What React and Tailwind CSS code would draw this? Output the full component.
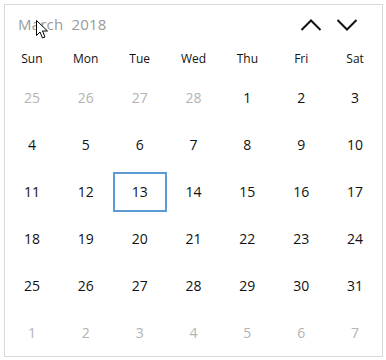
import React from "react";

const days = ["Sun", "Mon", "Tue", "Wed", "Thu", "Fri", "Sat"];

const weeks = [
  [[25, 0], [26, 0], [27, 0], [28, 0], [1, 1], [2, 1], [3, 1]],
  [[4, 1], [5, 1], [6, 1], [7, 1], [8, 1], [9, 1], [10, 1]],
  [[11, 1], [12, 1], [13, 2], [14, 1], [15, 1], [16, 1], [17, 1]],
  [[18, 1], [19, 1], [20, 1], [21, 1], [22, 1], [23, 1], [24, 1]],
  [[25, 1], [26, 1], [27, 1], [28, 1], [29, 1], [30, 1], [31, 1]],
  [[1, 0], [2, 0], [3, 0], [4, 0], [5, 0], [6, 0], [7, 0]],
];

export default function App() {
  return (
    <div className="w-[386px] h-[360px] bg-white pt-1 pl-1" style={{ fontFamily: '"Open Sans", "Noto Sans", sans-serif' }}>
      <div className="relative w-[379px] h-[353px] border border-[#d9d9d9] flex flex-col">
        <div className="h-[39px] flex items-center pl-[13px] pr-[24px]">
          <span className="text-[15px] text-[#9a9a9a] tracking-[0.2px]">March&nbsp;&nbsp;2018</span>
          <div className="ml-auto flex items-center gap-[14px]">
            <svg width="22" height="14" viewBox="0 0 22 14">
              <path d="M1.5 12 L11 2.5 L20.5 12" fill="none" stroke="#111" strokeWidth="2" />
            </svg>
            <svg width="22" height="14" viewBox="0 0 22 14">
              <path d="M1.5 2 L11 11.5 L20.5 2" fill="none" stroke="#111" strokeWidth="2" />
            </svg>
          </div>
        </div>
        <div className="h-[30px] grid grid-cols-7 items-center text-[12px] text-[#111]">
          {days.map((d) => (
            <div key={d} className="text-center">{d}</div>
          ))}
        </div>
        <div className="flex-1 grid grid-cols-7 grid-rows-6">
          {weeks.flat().map(([n, t], i) => (
            <div key={i} className="flex items-center justify-center">
              {t === 2 ? (
                <div className="w-[54px] h-[40px] border-2 border-[#5b9bd5] flex items-center justify-center text-[14px] text-[#111]">
                  {n}
                </div>
              ) : (
                <span className={"text-[14px] " + (t === 1 ? "text-[#111]" : "text-[#b3b3b3]")}>{n}</span>
              )}
            </div>
          ))}
        </div>
        <svg className="absolute left-[31px] top-[15px]" width="13" height="20" viewBox="0 0 13 20">
          <path d="M0.5 0.5 L0.5 15.5 L4 12 L6.5 18 L9 17 L6.5 11 L11.5 11 Z" fill="#fff" stroke="#000" strokeWidth="1" />
        </svg>
      </div>
    </div>
  );
}
